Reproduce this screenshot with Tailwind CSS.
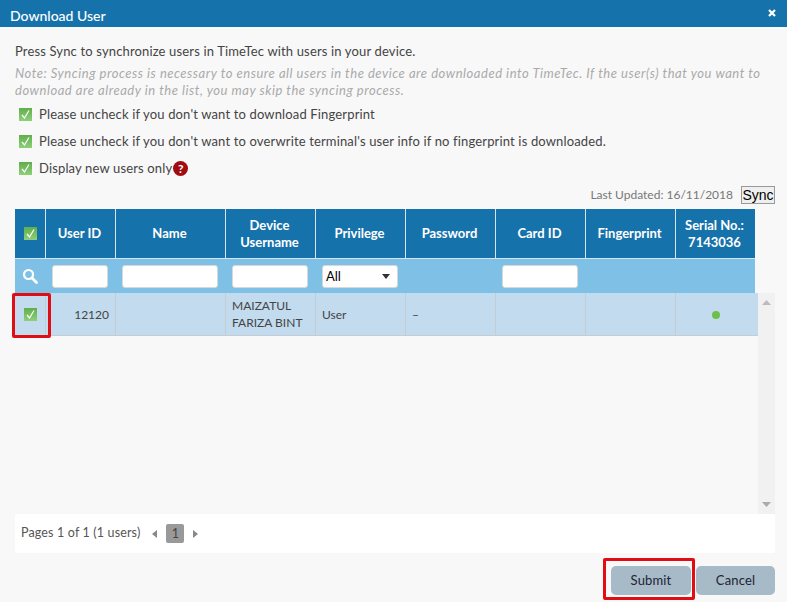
<!DOCTYPE html>
<html><head><meta charset="utf-8"><script src="https://cdn.jsdelivr.net/npm/@tailwindcss/browser@4"></script></head>
<body class="m-0">
<div class="relative w-[787px] h-[602px] overflow-hidden bg-[#f8f8f8] font-['Lato','Noto_Sans',sans-serif] text-[13px] text-[#444] tracking-[0.15px]">
  <div class="h-[27px] bg-[#1672ab] flex items-center justify-between pl-[10px] pr-[11px] text-white">
    <span class="text-[14px] font-medium tracking-normal pt-[3px]">Download User</span>
    <svg class="mb-[2px]" width="8" height="8" viewBox="0 0 8 8"><path d="M1 1L7 7M7 1L1 7" stroke="#fff" stroke-width="2.2"/></svg>
  </div>
  <svg width="0" height="0" class="absolute"><defs><linearGradient id="g" x1="0" y1="0" x2="0" y2="1"><stop offset="0" stop-color="#5fae4b"/><stop offset="1" stop-color="#8fd07a"/></linearGradient></defs></svg>
  <div class="pl-[15px] w-[775px]">
    <p class="mt-[16px] leading-[17px]">Press Sync to synchronize users in TimeTec with users in your device.</p>
    <p class="mt-[5px] leading-[17px] italic text-[#aaa] tracking-[0.53px]">Note: Syncing process is necessary to ensure all users in the device are downloaded into TimeTec. If the user(s) that you want to download are already in the list, you may skip the syncing process.</p>
    <div class="mt-[7px] flex flex-col gap-[10px] pl-[4px]">
      <label class="flex items-center gap-[7px] h-[17px]"><svg width="13" height="13" viewBox="0 0 13 13"><rect width="13" height="13" fill="url(#g)"/><path d="M3 7l2.500 3L10 2.500" fill="none" stroke="#fff" stroke-width="1.2"/></svg>Please uncheck if you don't want to download Fingerprint</label>
      <label class="flex items-center gap-[7px] h-[17px]"><svg width="13" height="13" viewBox="0 0 13 13"><rect width="13" height="13" fill="url(#g)"/><path d="M3 7l2.500 3L10 2.500" fill="none" stroke="#fff" stroke-width="1.2"/></svg>Please uncheck if you don't want to overwrite terminal's user info if no fingerprint is downloaded.</label>
      <label class="flex items-center h-[17px]"><svg class="mr-[7px]" width="13" height="13" viewBox="0 0 13 13"><rect width="13" height="13" fill="url(#g)"/><path d="M3 7l2.500 3L10 2.500" fill="none" stroke="#fff" stroke-width="1.2"/></svg>Display new users only<span class="ml-[1px] w-[15px] h-[15px] rounded-full bg-[#a00c10] text-white text-[12px] font-bold leading-[15px] text-center">?</span></label>
    </div>
    <div class="mt-[9px] h-[18px] flex items-center justify-end text-[#777] text-[12px] tracking-normal">
      <span>Last Updated: 16/11/2018</span>
      <button class="ml-[8px] w-[34px] h-[18px] border border-[#999] bg-[#efefef] text-black text-[14px] tracking-normal font-['Liberation_Sans'] leading-none">Sync</button>
    </div>
    <div class="mt-[5px] w-[740px] grid grid-cols-[30px_70px_110px_90px_90px_90px_90px_90px_80px] text-white font-bold text-center leading-[17px] tracking-normal">
      <div class="h-[49px] bg-[#1672ab] flex items-center justify-center"><svg width="13" height="13" viewBox="0 0 13 13"><rect width="13" height="13" fill="url(#g)"/><path d="M3 7l2.500 3L10 2.500" fill="none" stroke="#fff" stroke-width="1.2"/></svg></div>
      <div class="bg-[#1672ab] flex items-center justify-center border-l border-[#d5e5ef] pr-[2px]">User ID</div>
      <div class="bg-[#1672ab] flex items-center justify-center border-l border-[#d5e5ef] pr-[2px]">Name</div>
      <div class="bg-[#1672ab] flex items-center justify-center border-l border-[#d5e5ef] pr-[2px]">Device<br>Username</div>
      <div class="bg-[#1672ab] flex items-center justify-center border-l border-[#d5e5ef] pr-[2px]">Privilege</div>
      <div class="bg-[#1672ab] flex items-center justify-center border-l border-[#d5e5ef] pr-[2px]">Password</div>
      <div class="bg-[#1672ab] flex items-center justify-center border-l border-[#d5e5ef] pr-[2px]">Card ID</div>
      <div class="bg-[#1672ab] flex items-center justify-center border-l border-[#d5e5ef] pr-[2px]">Fingerprint</div>
      <div class="bg-[#1672ab] flex items-center justify-center border-l border-[#d5e5ef] pr-[2px]">Serial No.:<br>7143036</div>
      <div class="col-span-9 h-[35px] bg-[#7fc0e6] border-t border-[#d5e5ef] grid grid-cols-[30px_70px_110px_90px_90px_90px_90px_90px_80px] items-center">
        <div class="flex justify-center"><svg width="16" height="16" viewBox="0 0 16 16"><circle cx="6.500" cy="6.500" r="4.500" fill="none" stroke="#fff" stroke-width="2.2"/><path d="M10 10l4.500 4.500" stroke="#fff" stroke-width="2.8" stroke-linecap="round"/></svg></div>
        <div class="pl-[7px]"><div class="w-[56px] h-[23px] bg-white rounded-[3px] border border-[#d8d8d8]"></div></div>
        <div class="pl-[7px]"><div class="w-[96px] h-[23px] bg-white rounded-[3px] border border-[#d8d8d8]"></div></div>
        <div class="pl-[7px]"><div class="w-[76px] h-[23px] bg-white rounded-[3px] border border-[#d8d8d8]"></div></div>
        <div class="pl-[7px]"><div class="w-[76px] h-[23px] bg-white rounded-[3px] border border-[#d8d8d8] flex items-center justify-between pl-[3px] pr-[7px] text-black font-normal text-left"><span>All</span><svg width="8" height="5" viewBox="0 0 8 5"><path d="M0 0h8L4 5z" fill="#333"/></svg></div></div>
        <div></div>
        <div class="pl-[7px]"><div class="w-[76px] h-[23px] bg-white rounded-[3px] border border-[#d8d8d8]"></div></div>
      </div>
    </div>
    <div class="h-[221px]">
      <div class="w-[743px] h-[43px] bg-[#c2dbee] border-b border-[#c5ccd2] grid grid-cols-[30px_70px_110px_90px_90px_90px_90px_90px_83px] items-stretch font-normal leading-[17px] text-[#444] text-[12px] tracking-normal">
        <div class="flex items-center justify-center"><svg width="13" height="13" viewBox="0 0 13 13"><rect width="13" height="13" fill="url(#g)"/><path d="M3 7l2.500 3L10 2.500" fill="none" stroke="#fff" stroke-width="1.2"/></svg></div>
        <div class="flex items-center justify-end pr-[6px] border-l border-[#c5ccd2]">12120</div>
        <div class="border-l border-[#c5ccd2]"></div>
        <div class="flex items-center pl-[6px] border-l border-[#c5ccd2]">MAIZATUL<br>FARIZA BINT</div>
        <div class="flex items-center pl-[6px] border-l border-[#c5ccd2]">User</div>
        <div class="flex items-center pl-[6px] border-l border-[#c5ccd2]">–</div>
        <div class="border-l border-[#c5ccd2]"></div>
        <div class="border-l border-[#c5ccd2]"></div>
        <div class="flex items-center justify-center pr-[3px] pt-[2px] border-l border-[#c5ccd2]"><span class="w-[8px] h-[8px] rounded-full bg-[#6cc04a]"></span></div>
      </div>
    </div>
    <div class="h-[39px] w-[760px] bg-white rounded-[2px] flex items-center pl-[6px] text-[#555] text-[12.5px]">
      <span>Pages 1 of 1 (1 users)</span>
      <svg class="ml-[12px]" width="5" height="8" viewBox="0 0 5 8"><path d="M5 0v8L0 4z" fill="#888"/></svg>
      <span class="ml-[9px] w-[18px] h-[19px] bg-[#999] rounded-[2px] text-center leading-[19px] text-[#444]">1</span>
      <svg class="ml-[9px]" width="5" height="8" viewBox="0 0 5 8"><path d="M0 0v8l5-4z" fill="#888"/></svg>
    </div>
    <div class="mt-[13px] w-[760px] flex justify-end gap-[5px]">
      <button class="w-[80px] h-[29px] rounded-[5px] bg-[#a7bac7] text-[#223]">Submit</button>
      <button class="w-[79px] h-[29px] rounded-[5px] bg-[#a7bac7] text-[#223]">Cancel</button>
    </div>
  </div>
  <div class="absolute left-[758px] top-[293px] w-[17px] h-[221px] bg-[#f1f1f1] flex flex-col items-center justify-between py-[7px]">
    <svg width="9" height="5" viewBox="0 0 9 5"><path d="M0 5h9L4.500 0z" fill="#bbb"/></svg>
    <svg width="9" height="5" viewBox="0 0 9 5"><path d="M0 0h9L4.500 5z" fill="#aaa"/></svg>
  </div>
  <div class="absolute left-[12px] top-[293px] w-[39px] h-[45px] border-[3px] border-[#e00d14] rounded-[2px]"></div>
  <div class="absolute left-[603px] top-[558px] w-[92px] h-[42px] border-[3px] border-[#e00d14] rounded-[2px]"></div>
</div>
</body></html>
